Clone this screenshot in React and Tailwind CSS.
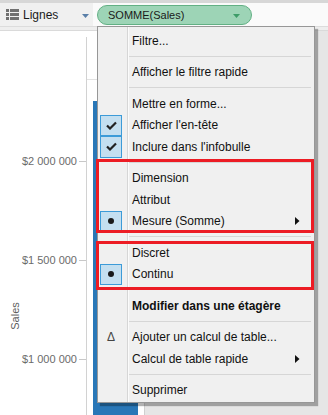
import React from 'react';

const ListIcon = () => (
  <svg width="13" height="11" viewBox="0 0 13 11" className="shrink-0">
    {[0, 4, 8].map((y) => (
      <g key={y} fill="#707070">
        <rect x="0" y={y} width="3" height="3" />
        <rect x="4" y={y} width="9" height="3" />
      </g>
    ))}
  </svg>
);

const Caret = ({ color }) => (
  <svg width="7" height="4" viewBox="0 0 7 4">
    <path d="M0 0h7L3.5 4z" fill={color} />
  </svg>
);

const Check = () => (
  <svg width="11" height="9" viewBox="0 0 11 9">
    <path d="M1 4.5l3 3L10 1.5" stroke="#222" strokeWidth="2.2" fill="none" />
  </svg>
);

const SubArrow = () => (
  <svg width="5" height="8" viewBox="0 0 5 8" className="ml-auto">
    <path d="M0 0l4.5 4L0 8z" fill="#111" />
  </svg>
);

const Sep = () => (
  <div className="flex h-[10px]">
    <div className="w-[30px] shrink-0" />
    <div className="flex-1 pt-[4px] pl-[1px] pr-[3px]">
      <div className="h-px bg-[#d6d6d6]" />
    </div>
  </div>
);

const Item = ({ label, mark, sub, bold }) => (
  <div className="flex h-[21.5px] items-center">
    <div className="w-[30px] shrink-0 h-full pl-[2px] flex items-center">
      {mark === 'check' && (
        <div className="w-[22px] h-full bg-[#c4dff0] border border-[#3c9bd8] flex items-center justify-center">
          <Check />
        </div>
      )}
      {mark === 'dot' && (
        <div className="w-[22px] h-full bg-[#c4dff0] border border-[#3c9bd8] flex items-center justify-center">
          <div className="w-[6px] h-[6px] rounded-full bg-[#1a1a1a]" />
        </div>
      )}
      {mark === 'delta' && (
        <div className="w-[22px] text-center text-[12px] text-[#444]">Δ</div>
      )}
    </div>
    <div className={`flex-1 flex items-center pl-[4px] pr-[14px] text-[12px] text-[#111] ${bold ? 'font-bold' : ''}`}>
      <span>{label}</span>
      {sub && <SubArrow />}
    </div>
  </div>
);

const ticks = [
  { label: '$2 000 000', y: 130 },
  { label: '$1 500 000', y: 229 },
  { label: '$1 000 000', y: 328 },
];

export default function App() {
  return (
    <div className="w-[328px] h-[415px] relative overflow-hidden bg-[#e6e6e6] font-['Liberation_Sans',Arial,sans-serif]">
      {/* shelf */}
      <div className="h-[3px] bg-[#d7d7d7]" />
      <div className="flex h-[24px] bg-[#fafafa] border-b border-[#dcdcdc]">
        <div className="w-[93px] bg-[#f0f0f0] flex items-center pl-[6px] pr-[4px]">
          <ListIcon />
          <span className="ml-[4px] text-[12px] text-[#1a1a1a]">Lignes</span>
          <div className="ml-auto mt-[2px]">
            <Caret color="#5a7fa8" />
          </div>
        </div>
        <div className="ml-[4px] mt-[2px] h-[20px] w-[155px] rounded-[10px] bg-[#9dd4b6] border border-[#62b084] flex items-center pl-[10px] pr-[11px]">
          <span className="text-[11px] text-[#1a1a1a]">SOMME(Sales)</span>
          <div className="ml-auto mt-[2px]">
            <Caret color="#3e9c68" />
          </div>
        </div>
      </div>
      <div className="h-[3px] bg-[#eeeeee]" />

      {/* chart */}
      <div className="flex h-[385px] border-t border-[#dadada]">
        <div className="w-[86px] bg-white relative">
          {ticks.map((t) => (
            <div key={t.label} className="absolute left-0 w-[86px] flex items-center justify-end" style={{ top: t.y - 7 }}>
              <span className="text-[11px] leading-[14px] text-[#6b6b6b]">{t.label}</span>
              <div className="ml-[2px] w-[7px] h-px bg-[#c8c8c8]" />
            </div>
          ))}
          <div className="absolute left-[15px] top-[285px] -translate-x-1/2 -translate-y-1/2 -rotate-90 text-[11px] text-[#606060]">
            Sales
          </div>
        </div>
        <div className="w-px bg-white flex flex-col">
          <div className="h-[6px]" />
          <div className="flex-1 bg-[#d2d2d2]" />
        </div>
        <div className="w-[58px] bg-white border-r border-[#d0d0d0] flex flex-col">
          <div className="h-[48px]" />
          <div className="h-px bg-[#e2e2e2]" />
          <div className="h-[21px]" />
          <div className="flex-1 ml-[6px] w-[45px] bg-[#2977b7]" />
        </div>
        <div className="flex-1 bg-[#e6e6e6]" />
      </div>

      {/* context menu */}
      <div className="absolute left-[97px] top-[26px] w-[218px] h-[377px] border border-[#979797] shadow-[3px_3px_1px_rgba(0,0,0,0.3)] bg-[linear-gradient(to_right,#f0f0f0_29px,#d6d6d6_29px,#d6d6d6_30px,#fbfbfb_30px,#fbfbfb_31px,#f0f0f0_31px)] pt-[3px]">
        <Item label="Filtre..." />
        <Sep />
        <Item label="Afficher le filtre rapide" />
        <Sep />
        <Item label="Mettre en forme..." />
        <Item label="Afficher l'en-tête" mark="check" />
        <Item label="Inclure dans l'infobulle" mark="check" />
        <Sep />
        <Item label="Dimension" />
        <Item label="Attribut" />
        <Item label="Mesure (Somme)" mark="dot" sub />
        <Sep />
        <Item label="Discret" />
        <Item label="Continu" mark="dot" />
        <Sep />
        <Item label="Modifier dans une étagère" bold />
        <Sep />
        <Item label="Ajouter un calcul de table..." mark="delta" />
        <Item label="Calcul de table rapide" sub />
        <Sep />
        <Item label="Supprimer" />
      </div>

      {/* highlight boxes */}
      <div className="absolute left-[96px] top-[159px] w-[218px] h-[74px] border-[3px] border-[#ec1c24]" />
      <div className="absolute left-[96px] top-[241px] w-[218px] h-[49px] border-[3px] border-[#ec1c24]" />
    </div>
  );
}
